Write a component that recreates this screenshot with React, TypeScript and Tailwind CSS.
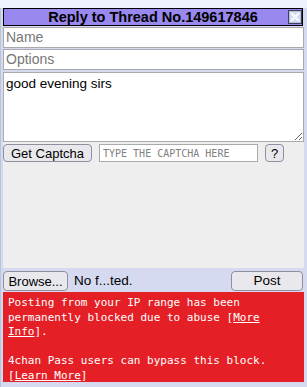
import React from "react";

const btn =
  "h-[18px] rounded-[4px] border border-[#8f8f9d] bg-[#e9e9ed] text-[13px] leading-none text-black flex items-center justify-center";

function CloseIcon() {
  return (
    <svg width="14" height="14" viewBox="0 0 14 14">
      <rect x="0.5" y="0.5" width="13" height="13" fill="#b9c3e0" stroke="#3a3f5c" />
      <rect x="2" y="2" width="10" height="10" fill="#d3daf0" />
      <path d="M3 3 L11 11 M11 3 L3 11" stroke="#ffffff" strokeWidth="2" />
      <path d="M3 3 L11 11 M11 3 L3 11" stroke="#eef1fb" strokeWidth="0.8" />
    </svg>
  );
}

export default function App() {
  return (
    <div className="w-[307px] h-[387px] overflow-hidden bg-[#eef2ff] pt-[8px] font-['Liberation_Sans',Arial,sans-serif]">
      <div className="h-[379px] bg-[#d6daf0] border-l border-[#b7c5d9] pl-[2px] pr-[3px] flex flex-col">
        {/* Header */}
        <div className="relative h-[18px] mr-[1px] bg-[#9988ee] border border-black flex items-center justify-center">
          <span className="text-[14.5px] font-bold leading-none text-black">Reply to Thread No.149617846</span>
          <div className="absolute right-[0px] top-[1px]">
            <CloseIcon />
          </div>
        </div>

        {/* Fields */}
        <input
          placeholder="Name"
          className="mt-[1px] h-[21px] w-full border border-[#aaaaaa] bg-white px-[2px] text-[14px] text-black placeholder:text-[#767676] outline-none"
        />
        <input
          placeholder="Options"
          className="mt-[1px] h-[21px] w-full border border-[#aaaaaa] bg-white px-[2px] text-[14px] text-black placeholder:text-[#767676] outline-none"
        />
        <textarea
          defaultValue="good evening sirs"
          className="mt-[2px] h-[70px] w-full border border-[#aaaaaa] bg-white px-[2px] py-[3px] text-[13.5px] leading-[16px] text-black outline-none"
        />

        {/* Captcha */}
        <div className="h-[126px] bg-[#eeeeee]">
          <div className="mt-[2px] flex items-center">
            <button className={`${btn} w-[89px]`}>Get Captcha</button>
            <input
              placeholder="TYPE THE CAPTCHA HERE"
              className="ml-[7px] h-[18px] w-[159px] border border-[#aaaaaa] bg-white px-[3px] font-['DejaVu_Sans_Mono',monospace] text-[10px] text-black placeholder:text-[#808080] outline-none"
            />
            <button className={`${btn} ml-[7px] w-[19px]`}>?</button>
          </div>
        </div>

        {/* File row */}
        <div className="h-[24px] flex items-center pt-[2px]">
          <button className="h-[20px] w-[65px] rounded-[4px] border border-[#8f8f9d] bg-[#e9e9ed] text-[13px] leading-none text-black flex items-center justify-center">
            Browse...
          </button>
          <span className="ml-[6px] text-[13.5px] text-black">No f...ted.</span>
          <button className="ml-auto h-[20px] w-[72px] mr-[1px] rounded-[4px] border border-[#8f8f9d] bg-[#e9e9ed] text-[13.5px] leading-none text-black flex items-center justify-center">
            Post
          </button>
        </div>

        {/* Error */}
        <div className="h-[90px] bg-[#e41f26] pl-[5px] pr-[4px] pt-[4px] font-['DejaVu_Sans_Mono',monospace] text-[11px] leading-[14.6px] text-white">
          <p>
            Posting from your IP range has been permanently blocked due to abuse [<span className="underline">More Info</span>].
          </p>
          <p className="mt-[14.6px]">
            4chan Pass users can bypass this block. [<span className="underline">Learn More</span>]
          </p>
        </div>
      </div>
    </div>
  );
}
